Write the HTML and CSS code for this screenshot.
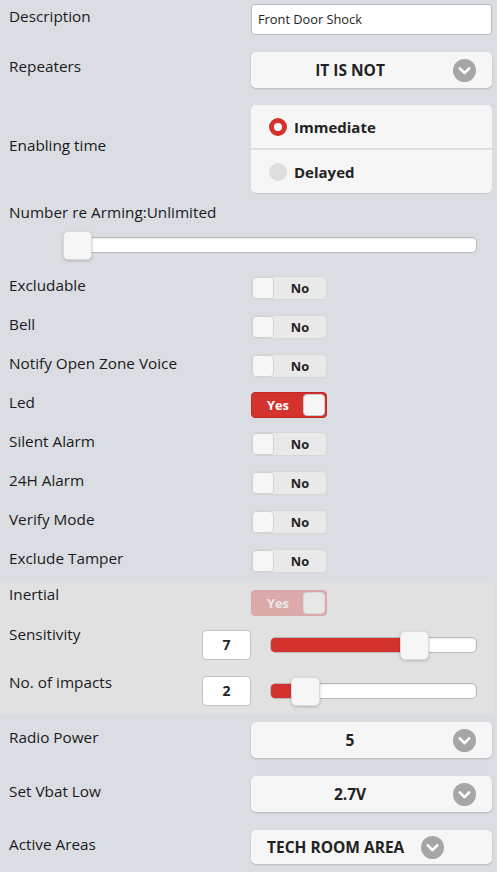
FILE: index.html
```html
<!DOCTYPE html>
<html>
<head>
<meta charset="utf-8">
<link rel="stylesheet" href="styles.css">
</head>
<body>
<div class="page">
  <div class="row row-desc">
    <div class="label">Description</div>
    <div class="control"><div class="text-input">Front Door Shock</div></div>
  </div>

  <div class="row row-sel">
    <div class="label">Repeaters</div>
    <div class="control">
      <div class="select"><span class="sel-text">IT IS NOT</span><span class="sel-icon"><svg viewBox="0 0 22 22" width="22" height="22"><circle cx="11" cy="11" r="11" fill="#a6a6a6"/><path d="M6.5 9 L11 13.5 L15.5 9" fill="none" stroke="#fff" stroke-width="2.6" stroke-linecap="round" stroke-linejoin="round"/></svg></span></div>
    </div>
  </div>

  <div class="row row-radio">
    <div class="label">Enabling time</div>
    <div class="control">
      <div class="radio-group">
        <div class="radio-opt"><span class="radio on"></span>Immediate</div>
        <div class="radio-opt"><span class="radio"></span>Delayed</div>
      </div>
    </div>
  </div>

  <div class="arming">
    <div class="label">Number re Arming:Unlimited</div>
    <div class="slider arming-slider"><div class="track"></div><div class="thumb" style="left:0%"></div></div>
  </div>

  <div class="toggles">
    <div class="row row-tog"><div class="label">Excludable</div><div class="control"><div class="toggle"><span class="t-thumb"></span><span class="t-text">No</span></div></div></div>
    <div class="row row-tog"><div class="label">Bell</div><div class="control"><div class="toggle"><span class="t-thumb"></span><span class="t-text">No</span></div></div></div>
    <div class="row row-tog"><div class="label">Notify Open Zone Voice</div><div class="control"><div class="toggle"><span class="t-thumb"></span><span class="t-text">No</span></div></div></div>
    <div class="row row-tog"><div class="label">Led</div><div class="control"><div class="toggle on"><span class="t-text">Yes</span><span class="t-thumb"></span></div></div></div>
    <div class="row row-tog"><div class="label">Silent Alarm</div><div class="control"><div class="toggle"><span class="t-thumb"></span><span class="t-text">No</span></div></div></div>
    <div class="row row-tog"><div class="label">24H Alarm</div><div class="control"><div class="toggle"><span class="t-thumb"></span><span class="t-text">No</span></div></div></div>
    <div class="row row-tog"><div class="label">Verify Mode</div><div class="control"><div class="toggle"><span class="t-thumb"></span><span class="t-text">No</span></div></div></div>
    <div class="row row-tog"><div class="label">Exclude Tamper</div><div class="control"><div class="toggle"><span class="t-thumb"></span><span class="t-text">No</span></div></div></div>
  </div>

  <div class="panel">
    <div class="row row-inertial"><div class="label">Inertial</div><div class="control"><div class="toggle on disabled"><span class="t-text">Yes</span><span class="t-thumb"></span></div></div></div>
    <div class="row row-num">
      <div class="label">Sensitivity</div>
      <div class="num-input">7</div>
      <div class="slider num-slider"><div class="track"><div class="fill" style="width:68%"></div></div><div class="thumb" style="left:63%"></div></div>
    </div>
    <div class="row row-num">
      <div class="label">No. of impacts</div>
      <div class="num-input">2</div>
      <div class="slider num-slider"><div class="track"><div class="fill" style="width:14%"></div></div><div class="thumb" style="left:10%"></div></div>
    </div>
  </div>

  <div class="row row-sel2">
    <div class="label">Radio Power</div>
    <div class="control">
      <div class="select"><span class="sel-text">5</span><span class="sel-icon"><svg viewBox="0 0 22 22" width="22" height="22"><circle cx="11" cy="11" r="11" fill="#a6a6a6"/><path d="M6.5 9 L11 13.5 L15.5 9" fill="none" stroke="#fff" stroke-width="2.6" stroke-linecap="round" stroke-linejoin="round"/></svg></span></div>
    </div>
  </div>
  <div class="row row-sel2">
    <div class="label">Set Vbat Low</div>
    <div class="control">
      <div class="select"><span class="sel-text">2.7V</span><span class="sel-icon"><svg viewBox="0 0 22 22" width="22" height="22"><circle cx="11" cy="11" r="11" fill="#a6a6a6"/><path d="M6.5 9 L11 13.5 L15.5 9" fill="none" stroke="#fff" stroke-width="2.6" stroke-linecap="round" stroke-linejoin="round"/></svg></span></div>
    </div>
  </div>
  <div class="row row-sel2">
    <div class="label">Active Areas</div>
    <div class="control">
      <div class="select select-left"><span class="sel-text">TECH ROOM AREA</span><span class="sel-icon"><svg viewBox="0 0 22 22" width="22" height="22"><circle cx="11" cy="11" r="11" fill="#a6a6a6"/><path d="M6.5 9 L11 13.5 L15.5 9" fill="none" stroke="#fff" stroke-width="2.6" stroke-linecap="round" stroke-linejoin="round"/></svg></span></div>
    </div>
  </div>
</div>
</body>
</html>
```

FILE: styles.css
```css
html, body {
  margin: 0;
  padding: 0;
}
body {
  background: #dadde1;
  font-family: "Open Sans", "Noto Sans", sans-serif;
  color: #1a1a22;
  width: 497px;
  height: 872px;
  overflow: hidden;
}
.page {
  padding-top: 4px;
}
.row {
  display: flex;
  align-items: center;
}
.label {
  width: 243px;
  padding-left: 9px;
  font-size: 15.3px;
  line-height: 18px;
  box-sizing: border-box;
  flex: none;
  white-space: nowrap;
}
.control {
  width: 241px;
  flex: none;
  margin-left: 8px;
}

/* Description */
.row-desc .label { padding-bottom: 7px; }
.text-input {
  box-sizing: border-box;
  height: 31px;
  background: #fff;
  border: 1px solid #b9b9b9;
  border-radius: 3px;
  font-size: 12.8px;
  line-height: 29px;
  padding-left: 6px;
  color: #222;
}

/* Select */
.row-sel { margin-top: 17px; }
.row-sel .label { padding-bottom: 8px; }
.select {
  box-sizing: border-box;
  height: 36px;
  background: #f6f6f6;
  border-radius: 5px;
  box-shadow: 0 1px 2px rgba(0,0,0,0.18);
  display: flex;
  align-items: center;
  padding: 0 16px 0 16px;
  font-weight: 700;
  font-size: 15.5px;
  color: #222;
}
.sel-text {
  flex: 1;
  text-align: center;
  padding-right: 20px;
}
.sel-icon {
  width: 23px;
  height: 23px;
  flex: none;
  display: block;
}
.sel-icon svg { display: block; width: 23px; height: 23px; }
.select-left .sel-text {
  flex: none;
  text-align: left;
  padding-right: 0;
}
.select-left .sel-icon { margin-left: 17px; }

/* Radio group */
.row-radio { margin-top: 17px; }
.row-radio .label { padding-bottom: 8px; }
.radio-group {
  background: #f6f6f6;
  border-radius: 5px;
  box-shadow: 0 1px 1px rgba(0,0,0,0.08);
  overflow: hidden;
}
.radio-opt {
  height: 43px;
  display: flex;
  align-items: center;
  padding-left: 18px;
  font-weight: 700;
  font-size: 15px;
  color: #222;
}
.radio-opt + .radio-opt {
  border-top: 2px solid #dedede;
}
.radio {
  width: 18px;
  height: 18px;
  border-radius: 50%;
  background: #dedede;
  margin-right: 7px;
  box-sizing: border-box;
  flex: none;
}
.radio.on {
  background: #fff;
  border: 5px solid #d3332c;
}

/* Arming slider */
.arming { margin-top: 10px; }
.arming .label { width: auto; }
.slider {
  position: relative;
  height: 29px;
}
.arming-slider {
  margin-top: 10px;
  margin-left: 63px;
  width: 414px;
}
.track {
  position: absolute;
  left: 0;
  right: 0;
  top: 6px;
  height: 16px;
  box-sizing: border-box;
  background: #fff;
  border: 1px solid #b8b8b8;
  border-radius: 5px;
  box-shadow: inset 0 1px 2px rgba(0,0,0,0.08);
  overflow: hidden;
}
.fill {
  height: 100%;
  background: #d3332c;
}
.thumb {
  position: absolute;
  top: 0;
  width: 29px;
  height: 29px;
  box-sizing: border-box;
  background: #f6f6f6;
  border: 1px solid #dcdcdc;
  border-radius: 5px;
  box-shadow: 0 1px 3px rgba(0,0,0,0.2);
}

/* Toggles */
.toggles { margin-top: 16px; }
.row-tog { height: 24px; margin-bottom: 15px; }
.row-tog .label { padding-bottom: 6px; }
.toggle {
  box-sizing: border-box;
  width: 76px;
  height: 24px;
  background: #e9e9e9;
  border: 1px solid #d6d6d6;
  border-radius: 4px;
  display: flex;
  align-items: center;
  position: relative;
}
.t-thumb {
  width: 22px;
  height: 22px;
  box-sizing: border-box;
  background: #f6f6f6;
  border: 1px solid #d2d2d2;
  border-radius: 4px;
  flex: none;
}
.t-text {
  flex: 1;
  text-align: center;
  font-weight: 700;
  font-size: 12.8px;
  color: #222;
}
.toggle.on {
  background: #d3332c;
  border: 1px solid #c02a24;
  height: 26px;
  padding: 1px;
}
.toggle.on .t-text { color: #fff; }
.toggle.on .t-thumb { border-color: #c9c9c9; }
.toggle.disabled { opacity: 0.3; }

/* Panel */
.panel {
  margin-top: -5px;
  background: #e1e1e1;
  width: 493px;
  padding-top: 7px;
  padding-bottom: 8px;
}
.row-inertial { align-items: flex-start; height: 26px; }
.row-inertial .label { margin-top: -5px; }
.row-num {
  align-items: flex-start;
  margin-top: 14px;
  height: 30px;
}
.row-num + .row-num { margin-top: 16px; }
.row-num .label {
  width: 202px;
  margin-top: -5px;
}
.row-num + .row-num .label { margin-top: -3px; }
.num-input {
  box-sizing: border-box;
  width: 49px;
  height: 30px;
  background: #fff;
  border: 1px solid #c2c2c2;
  border-radius: 4px;
  text-align: center;
  font-weight: 700;
  font-size: 14px;
  line-height: 28px;
  color: #222;
  flex: none;
}
.num-slider {
  margin-left: 19px;
  width: 207px;
  margin-top: 1px;
}

/* Bottom selects */
.row-sel2 { margin-top: 8px; }
.row-sel2 + .row-sel2 { margin-top: 18px; }
.row-sel2 .label { padding-bottom: 6px; }
.row-sel2:last-child .select { height: 34px; }
```
